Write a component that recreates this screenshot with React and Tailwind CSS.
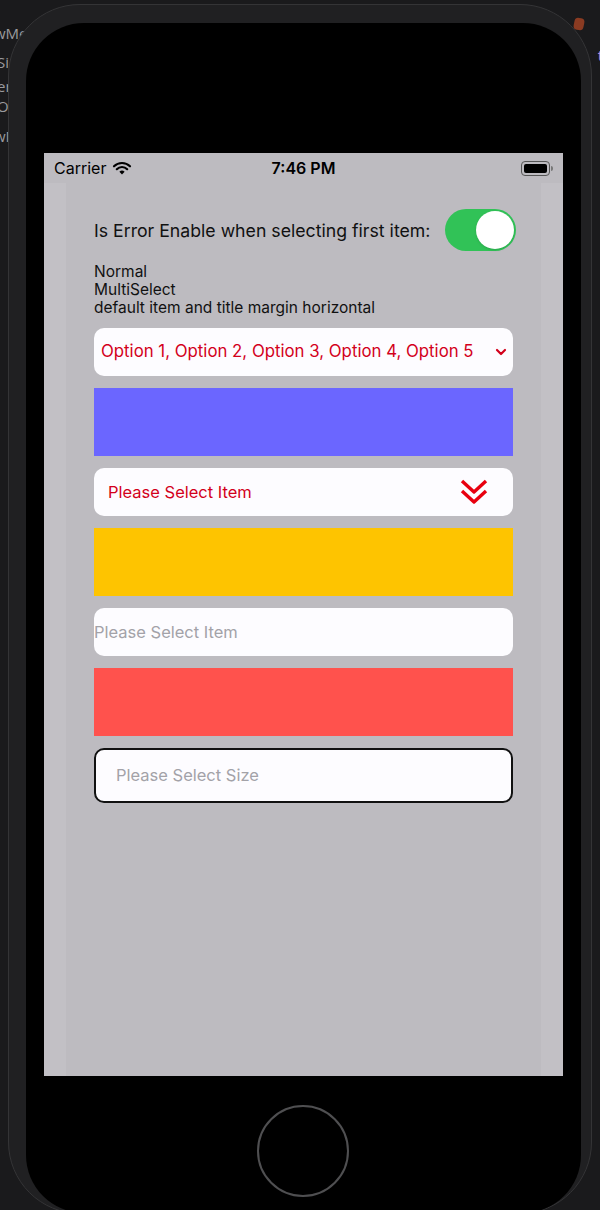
import React from "react";

const font = { fontFamily: "Inter, 'Noto Sans', sans-serif" };

function Wifi() {
  return (
    <svg width="20" height="15" viewBox="0 0 20 15" className="ml-[6px]">
      <path d="M10 13.5l2.6-2.7a3.7 3.7 0 0 0-5.2 0z" fill="#000" />
      <path d="M4.8 8.2a7.3 7.3 0 0 1 10.4 0" stroke="#000" strokeWidth="2.2" fill="none" strokeLinecap="round" />
      <path d="M2 5.3a11.3 11.3 0 0 1 16 0" stroke="#000" strokeWidth="2.2" fill="none" strokeLinecap="round" />
    </svg>
  );
}

function Battery() {
  return (
    <div className="flex items-center">
      <div className="w-[29px] h-[15px] rounded-[4px] border border-[#555] p-[2px]">
        <div className="w-full h-full rounded-[2px] bg-black" />
      </div>
      <div className="w-[2px] h-[5px] rounded-r-sm bg-[#777] ml-[1px]" />
    </div>
  );
}

function Chevron() {
  return (
    <svg width="12" height="8" viewBox="0 0 12 8">
      <path d="M2 2l4 4 4-4" stroke="#d3001b" strokeWidth="2.2" fill="none" strokeLinecap="round" strokeLinejoin="round" />
    </svg>
  );
}

function DoubleChevron() {
  return (
    <svg width="28" height="28" viewBox="0 0 28 28">
      <path d="M2 3l12 11 12-11" stroke="#e8000f" strokeWidth="3.4" fill="none" strokeLinejoin="round" />
      <path d="M2 13l12 11 12-11" stroke="#e8000f" strokeWidth="3.4" fill="none" strokeLinejoin="round" />
    </svg>
  );
}

function Block({ color }) {
  return <div className={`h-[68px] ${color}`} />;
}

// bits of the editor window peeking out behind the simulator
function EditorScraps() {
  return (
    <div className="absolute inset-0 text-[#9a9a9e] text-[15px] leading-none" style={{ fontFamily: "'Open Sans', sans-serif" }}>
      <span className="absolute left-[-6px] top-[26px]">wMe</span>
      <span className="absolute left-[-3px] top-[55px]">Si</span>
      <span className="absolute left-[-3px] top-[79px]">er</span>
      <span className="absolute left-[-3px] top-[99px]">OS</span>
      <span className="absolute left-[-6px] top-[129px]">wM</span>
      <span className="absolute right-[-3px] top-[48px] text-[#b58bd6]">t</span>
      <span className="absolute right-[16px] top-[18px] w-[10px] h-[12px] bg-[#8a3b22] rounded-sm rotate-12" />
    </div>
  );
}

export default function App() {
  return (
    <div className="relative w-[600px] h-[1210px] overflow-hidden bg-[#1a1a1c]" style={font}>
      <EditorScraps />
      <div className="relative pt-[4px] pl-[8px] pr-[8px]">
        <div className="h-[1210px] rounded-[72px] bg-[#202022] border border-[#343436] pt-[18px] pl-[17px] pr-[10px]">
          <div className="h-[1190px] rounded-[58px] bg-black flex flex-col pt-[130px] pl-[18px]">
            <div className="w-[519px] h-[923px] bg-[#bdbbc0] flex flex-col">
              <div className="h-[30px] flex items-center pl-[10px] pr-[10px] shrink-0">
                <div className="flex items-center flex-1">
                  <span className="text-[16px] text-black">Carrier</span>
                  <Wifi />
                </div>
                <span className="text-[16px] font-semibold text-black">7:46 PM</span>
                <div className="flex-1 flex justify-end">
                  <Battery />
                </div>
              </div>
              <div className="flex flex-1">
                <div className="w-[22px] bg-[#c2c0c5]" />
                <div className="flex-1 px-[28px] pt-[26px] flex flex-col">
                  <div className="flex items-center">
                    <span className="text-[17.7px] text-[#111] mt-[3px]">Is Error Enable when selecting first item:</span>
                    <div className="ml-auto -mr-[3px] w-[71px] h-[42px] rounded-full bg-[#31c257] p-[2px] flex justify-end">
                      <div className="w-[38px] h-[38px] rounded-full bg-white shadow" />
                    </div>
                  </div>
                  <div className="mt-[12px] text-[15.5px] leading-[18px] text-[#111]">
                    <div>Normal</div>
                    <div>MultiSelect</div>
                    <div>default item and title margin horizontal</div>
                  </div>
                  <div className="mt-[11px] flex flex-col gap-[12px]">
                    <div className="h-[48px] rounded-[10px] bg-[#fdfcff] flex items-center pl-[7px] pr-[6px]">
                      <span className="text-[16.8px] text-[#d3001b] flex-1 whitespace-nowrap">
                        Option 1, Option 2, Option 3, Option 4, Option 5
                      </span>
                      <Chevron />
                    </div>
                    <Block color="bg-[#6b66ff]" />
                    <div className="h-[48px] rounded-[10px] bg-[#fdfcff] flex items-center pl-[14px] pr-[25px]">
                      <span className="text-[16.5px] text-[#d3001b] flex-1">Please Select Item</span>
                      <DoubleChevron />
                    </div>
                    <Block color="bg-[#fec400]" />
                    <div className="h-[48px] rounded-[10px] bg-[#fdfcff] flex items-center">
                      <span className="text-[16.5px] text-[#a3a2a8]">Please Select Item</span>
                    </div>
                    <Block color="bg-[#ff524d]" />
                    <div className="h-[55px] rounded-[10px] bg-[#fdfcff] border-2 border-[#111] flex items-center pl-[20px]">
                      <span className="text-[16.5px] text-[#a3a2a8]">Please Select Size</span>
                    </div>
                  </div>
                </div>
                <div className="w-[22px] bg-[#c2c0c5]" />
              </div>
            </div>
            <div className="mt-[29px] ml-[213px] w-[92px] h-[92px] rounded-full border-2 border-[#4f4f51]" />
          </div>
        </div>
      </div>
    </div>
  );
}
